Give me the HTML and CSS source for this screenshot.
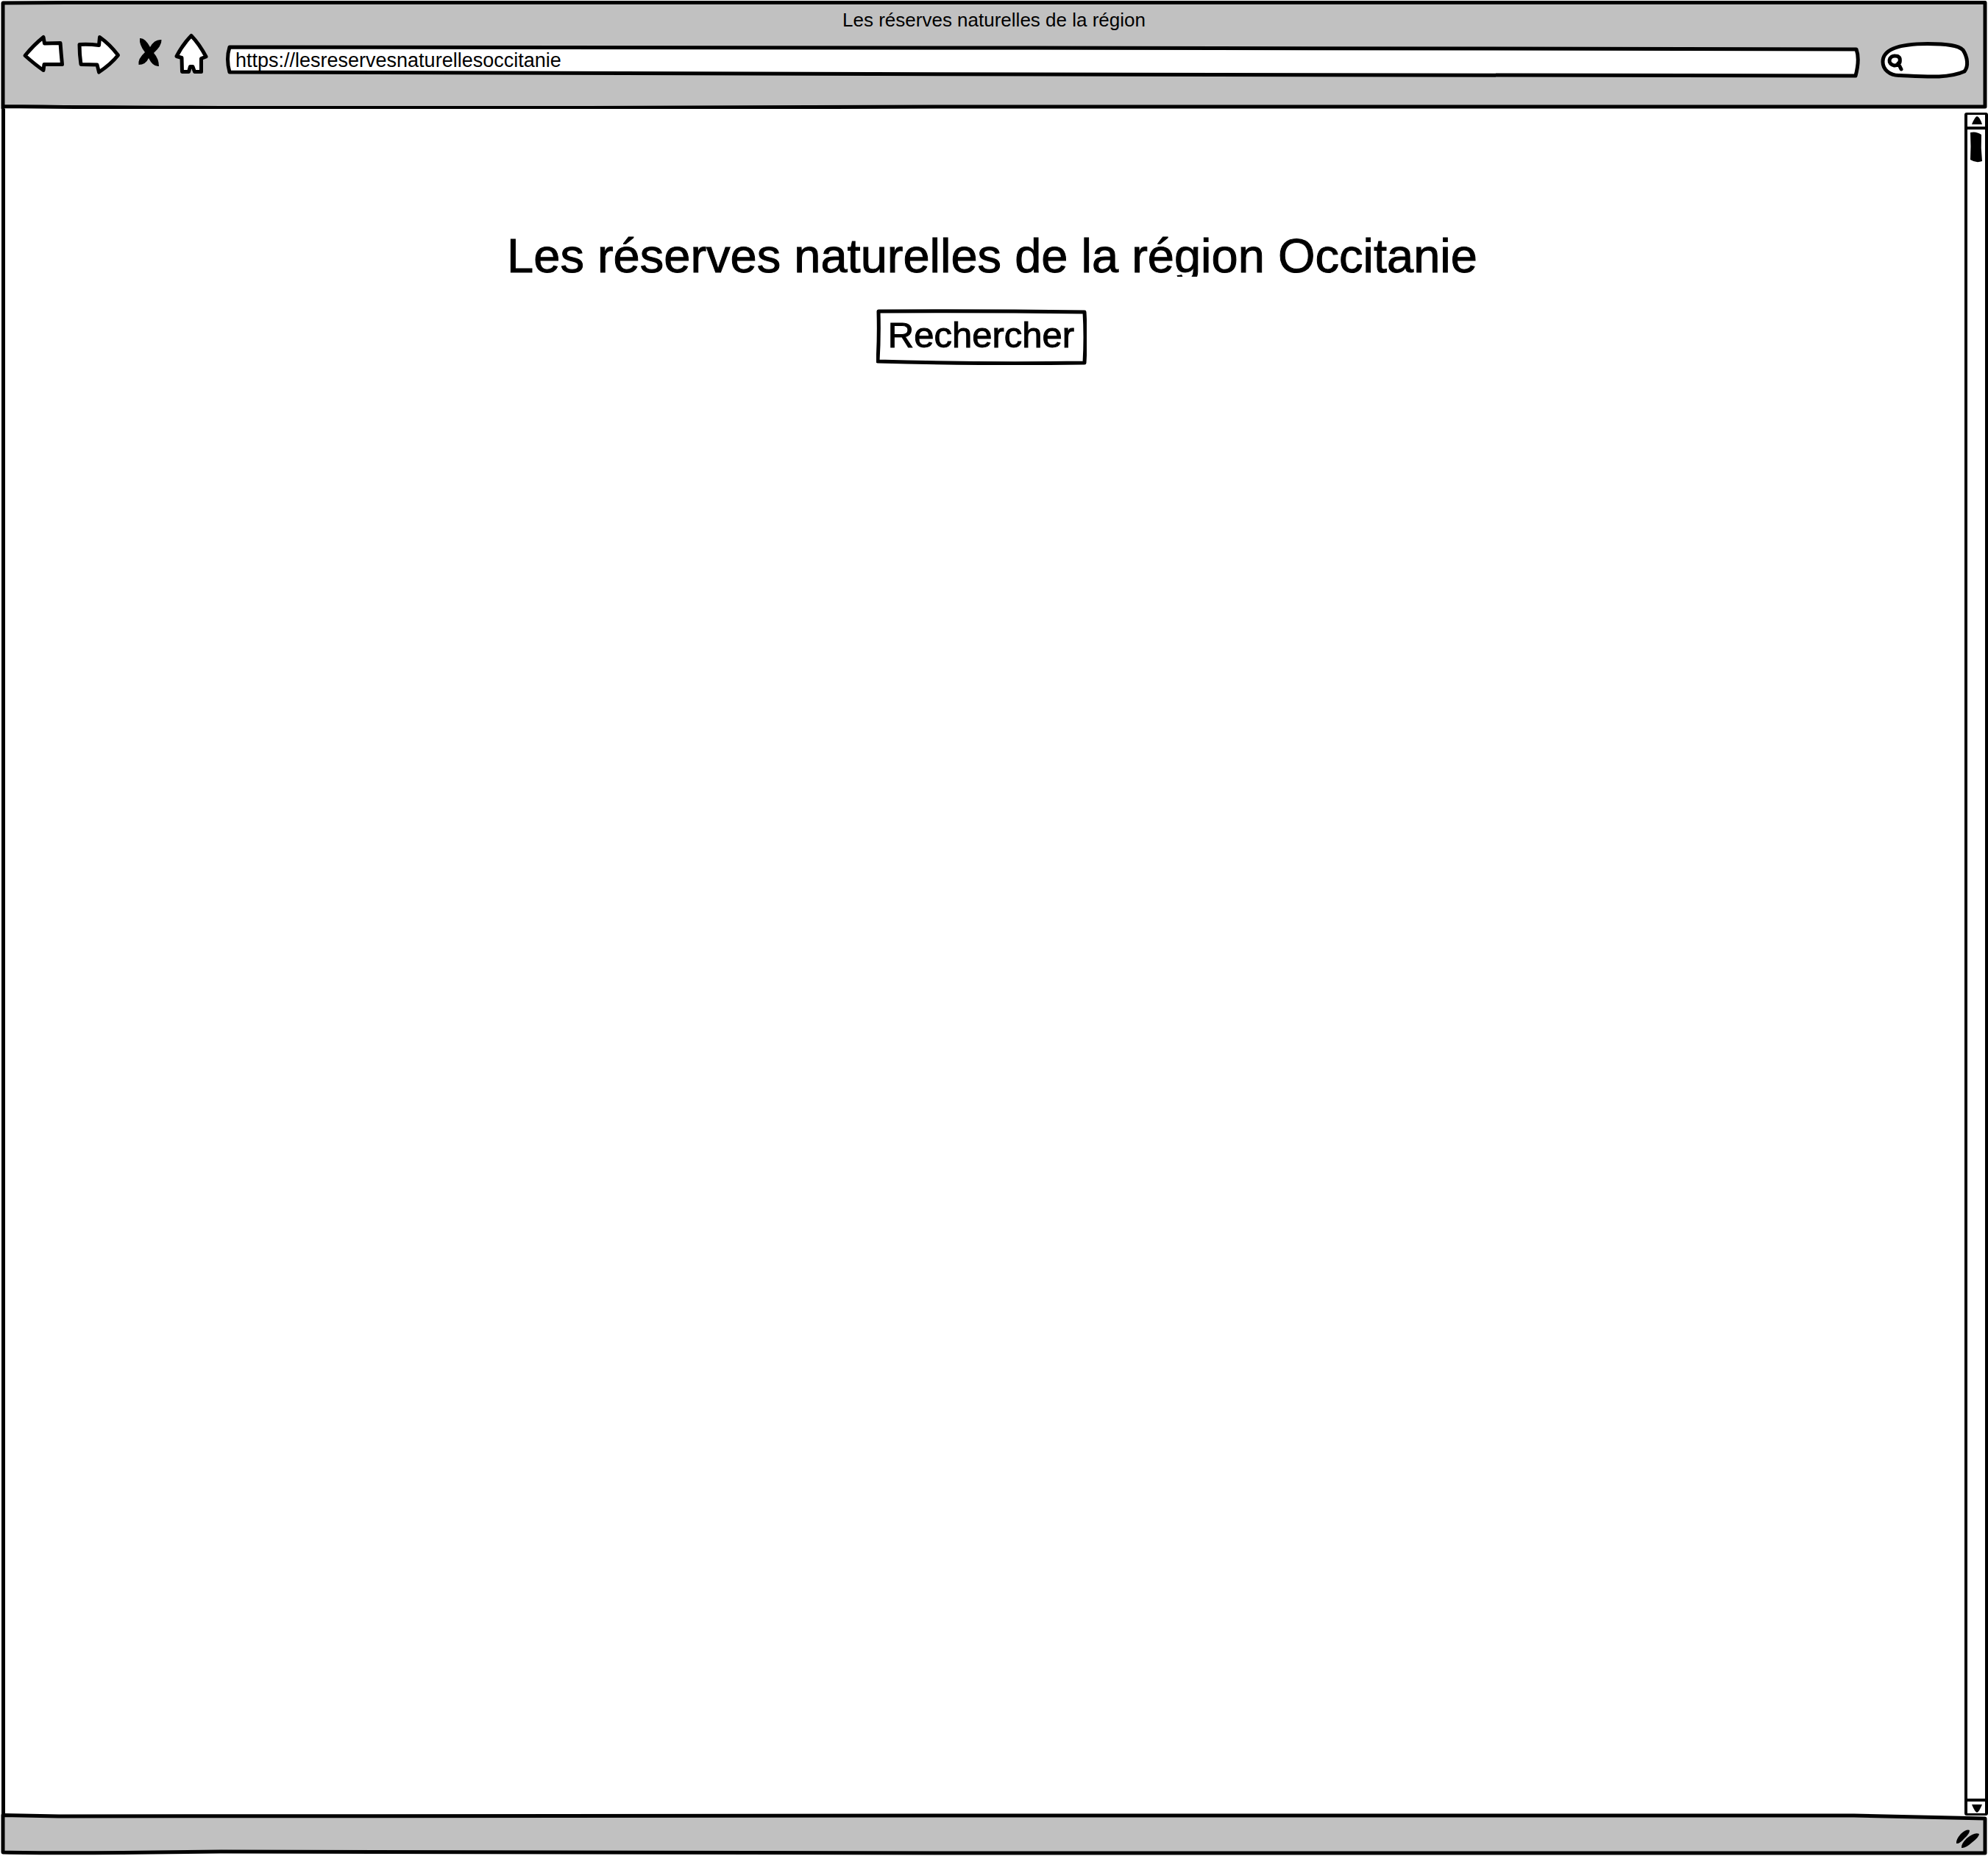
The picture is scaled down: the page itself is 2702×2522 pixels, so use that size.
FILE: index.html
```html
<!DOCTYPE html>
<html lang="fr">
<head>
<meta charset="utf-8">
<meta name="viewport" content="width=device-width, initial-scale=1">
<title>Les réserves naturelles de la région</title>
<link rel="stylesheet" href="styles.css">
</head>
<body>
<div class="window">
  <header class="chrome">
    <svg class="sketch" viewBox="0 0 2702 148" preserveAspectRatio="none" aria-hidden="true">
      <path class="panel" d="M4 147V4L90 3.500H2698V145H1300L800 146.500H300Q120 146 4 144.500"/>
    </svg>
    <p class="window-title">Les réserves naturelles de la région</p>
    <div class="toolbar">
      <button class="tool" type="button" aria-label="Précédent">
        <svg width="60" height="60" viewBox="30 44 60 60"><path class="shape" d="M34 75.500Q46 61 59 50.500L60.500 59L82 58.500Q83 72 84.500 87.500L60 87.500L59 95.500Q48 88 34 75.500Z"/></svg>
      </button>
      <button class="tool" type="button" aria-label="Suivant">
        <svg width="64" height="60" viewBox="102 44 64 60"><path class="shape" d="M108 60.500Q120 59.500 134.500 61.500L135.500 50.500Q149 60 160.500 75Q151 87 134.500 98L132 88L110 87.500Q108 74 108 60.500Z"/></svg>
      </button>
      <button class="tool" type="button" aria-label="Arrêter">
        <svg width="46" height="60" viewBox="178 44 46 60"><path d="M190 52Q197 51 204 64Q210 53 219.500 54Q220 62 209 72Q216 80 216 90Q208 91 202 79Q198 88 188.500 88Q187 80 197 71Q189 61 190 52Z"/></svg>
      </button>
      <button class="tool" type="button" aria-label="Accueil">
        <svg width="48" height="60" viewBox="236 44 48 60"><path class="shape" d="M260 48.500Q271 60 280 77L273.500 79.500L273.500 97.500H264.500L262 90.500H258.500L256.500 97.500H247.500L247 78.500L240 76.500Q248 61 260 48.500Z"/></svg>
      </button>
      <form class="address">
        <svg class="sketch" viewBox="0 0 2222 46" preserveAspectRatio="none" aria-hidden="true">
          <path class="field" d="M6 4L1100 5L2217 7Q2222 20 2216 43L1100 41L6 38Q1 20 6 4Z"/>
        </svg>
        <input class="address-input" type="text" aria-label="Adresse" value="https://lesreservesnaturellesoccitanie">
      </form>
      <form class="search">
        <svg class="sketch" viewBox="2556 56 122 52" aria-hidden="true">
          <path class="field" d="M2582 102.500C2568 103 2559 94 2559 84C2559 66 2584 59.500 2620 59.500C2648 59.500 2662 62 2668 68C2674 77 2676 90 2670 97C2648 107 2616 104 2582 102.500Z"/>
          <path class="lens" d="M2582 83A7 6.500 0 1 1 2576 76Q2584 76 2582 85ZM2580 86L2584 94"/>
        </svg>
        <input class="search-input" type="text" aria-label="Rechercher">
      </form>
    </div>
  </header>

  <div class="viewport">
    <main class="page">
      <h1 class="heading">Les réserves naturelles de la région Occitanie</h1>
      <button class="cta" type="button">
        <svg class="sketch" viewBox="0 0 286 76" preserveAspectRatio="none" aria-hidden="true">
          <path class="outline" d="M3 3Q140 2 283 4Q285 38 283 73Q140 75 2 71Q4 38 3 3Z"/>
        </svg>
        Rechercher
      </button>
    </main>
    <div class="scrollbar">
      <button class="scroll-button" type="button" aria-label="Défiler vers le haut">
        <svg width="24" height="16" viewBox="2674 156 24 16"><path d="M2680 169Q2684 159 2687 158Q2691 159 2694 169Z"/></svg>
      </button>
      <div class="track">
        <svg width="24" height="48" viewBox="2674 175 24 48"><path d="M2678 179Q2686 177 2693 182Q2692 200 2694 218Q2686 221 2678 216Q2679 198 2678 179Z"/></svg>
      </div>
      <button class="scroll-button" type="button" aria-label="Défiler vers le bas">
        <svg width="24" height="16" viewBox="2674 2447 24 16"><path d="M2680 2451H2694Q2690 2461 2687 2462Q2684 2461 2680 2451Z"/></svg>
      </button>
    </div>
  </div>

  <footer class="status">
    <svg class="sketch" viewBox="0 0 2702 58" preserveAspectRatio="none" aria-hidden="true">
      <path class="panel" d="M4 2.500L80 4L1300 3L2520 3L2698 7V54L1300 54L300 52Q90 55 4 53Z"/>
    </svg>
    <svg class="grip" width="36" height="30" viewBox="2657 2482 36 30" aria-hidden="true"><path d="M2659 2503Q2658 2498 2665 2490Q2673 2483 2677 2485Q2677 2490 2670 2496Q2663 2504 2659 2503ZM2666 2509Q2665 2504 2673 2496Q2684 2487 2690 2490Q2690 2494 2681 2501Q2671 2510 2666 2509Z"/></svg>
  </footer>
</div>
</body>
</html>
```
FILE: styles.css
```css
* {
  box-sizing: border-box;
}

body {
  margin: 0;
  background: #fff;
  color: #000;
  font-family: "Liberation Sans", Arial, sans-serif;
}

button,
input {
  margin: 0;
  padding: 0;
  border: 0;
  background: none;
  color: inherit;
  font: inherit;
}

svg {
  display: block;
}

.window {
  display: flex;
  flex-direction: column;
  min-height: 100vh;
}

/* Hand-drawn outlines sit behind the content they frame. */
.sketch {
  position: absolute;
  inset: 0;
  z-index: -1;
  width: 100%;
  height: 100%;
}

.sketch path {
  stroke: #000;
  stroke-width: 5px;
  stroke-linejoin: round;
  stroke-linecap: round;
  vector-effect: non-scaling-stroke;
}

.panel {
  fill: #c1c1c1;
}

.field,
.outline,
.shape {
  fill: #fff;
}

.lens {
  fill: none;
}

.shape {
  stroke: #000;
  stroke-width: 5px;
  stroke-linejoin: round;
}

.chrome,
.address,
.search,
.cta,
.status {
  position: relative;
  z-index: 0;
}

.chrome {
  height: 148px;
  padding-top: 11px;
}

.window-title {
  margin: 0;
  font-size: 26px;
  line-height: 33px;
  text-align: center;
}

.toolbar {
  display: flex;
  align-items: flex-start;
  gap: 12px;
  padding: 0 24px 0 30px;
}

.address {
  flex: 1;
  height: 46px;
  margin: 16px 16px 0 10px;
}

.address-input {
  width: 100%;
  height: 44px;
  padding: 0 14px;
  font-size: 27px;
}

.search {
  width: 122px;
  height: 52px;
  margin-top: 12px;
}

.search-input {
  width: 100%;
  height: 100%;
  padding: 0 16px 0 32px;
  font-size: 27px;
}

.viewport {
  display: flex;
  flex: 1;
  margin-left: 2px;
  border-left: 5px solid #000;
}

.page {
  display: flex;
  flex: 1;
  flex-direction: column;
  align-items: center;
  padding: 164px 0 0 20px;
}

.heading,
.cta {
  -webkit-text-stroke: 1px #000;
}

/* The title box is shorter than its descenders. */
.heading {
  height: 64px;
  margin: 0;
  overflow: hidden;
  font-size: 65px;
  font-weight: 400;
  line-height: 72px;
}

.cta {
  width: 286px;
  height: 76px;
  margin: 44px 30px 0 0;
  padding-bottom: 6px;
  font-size: 49px;
}

.scrollbar {
  display: flex;
  flex-direction: column;
  width: 32px;
  margin-top: 5px;
  border: 4px solid #000;
  border-width: 3px 4px 3px 4px;
  border-radius: 3px;
}

.track {
  flex: 1;
  border: solid #000;
  border-width: 4px 0;
}

.status {
  display: flex;
  justify-content: flex-end;
  height: 58px;
  margin-top: -3px;
  padding: 20px 9px 0 0;
}
```
